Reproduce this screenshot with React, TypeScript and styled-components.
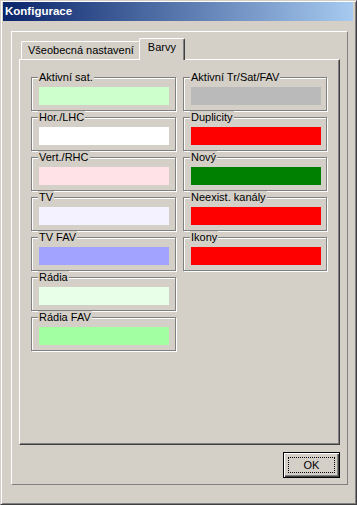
import styled, { createGlobalStyle } from 'styled-components';

const GlobalStyle = createGlobalStyle`
  html, body {
    margin: 0;
    padding: 0;
    background: #d4d0c8;
  }
  body {
    font-family: "Liberation Sans", Arial, sans-serif;
    font-size: 11px;
    color: #000;
  }
`;

const Window = styled.div`
  box-sizing: border-box;
  width: 357px;
  height: 505px;
  background: #d4d0c8;
  border: 1px solid;
  border-color: #d4d0c8 #404040 #404040 #d4d0c8;
  box-shadow: inset 1px 1px 0 #fff, inset -1px -1px 0 #808080;
  padding: 1px 3px 0 2px;
`;

const TitleBar = styled.div`
  height: 19px;
  background: linear-gradient(to right, #0a246a, #a6caf0);
  color: #fff;
  font-weight: bold;
  font-size: 11.5px;
  line-height: 19px;
  padding-left: 2px;
`;

const Frame = styled.div`
  box-sizing: border-box;
  width: 337px;
  height: 454px;
  margin: 10px 0 0 8px;
  border: 1px solid;
  border-color: #fff #808080 #808080 #fff;
  padding: 6px 7px 0 7px;
`;

const TabRow = styled.div`
  display: flex;
  align-items: flex-end;
  height: 21px;
  padding-left: 2px;
`;

const Tab = styled.div<{ $active?: boolean }>`
  position: relative;
  box-sizing: border-box;
  height: ${(p) => (p.$active ? 22 : 18)}px;
  margin: ${(p) => (p.$active ? '0 -2px -1px -2px' : '0')};
  padding: 2px ${(p) => (p.$active ? 8 : 6)}px 0;
  line-height: 13px;
  background: #d4d0c8;
  border-top: 1px solid #fff;
  border-left: 1px solid #fff;
  border-right: 1px solid #404040;
  box-shadow: inset -1px 0 0 #808080;
  border-radius: 2px 2px 0 0;
  z-index: ${(p) => (p.$active ? 2 : 1)};
  white-space: nowrap;
`;

const Panel = styled.div`
  box-sizing: border-box;
  width: 321px;
  height: 386px;
  border: 1px solid;
  border-color: #fff #404040 #404040 #fff;
  box-shadow: inset -1px -1px 0 #808080;
  padding: 17px 0 0 11px;
  display: grid;
  grid-template-columns: 145px 144px;
  column-gap: 7px;
  align-content: start;
  align-items: start;
`;

const Column = styled.div`
  display: flex;
  flex-direction: column;
  gap: 6px;
`;

const Group = styled.div`
  position: relative;
  box-sizing: border-box;
  height: 34px;
  border: 1px solid #808080;
  box-shadow: inset 1px 1px 0 #fff, 1px 1px 0 #fff;
  padding: 9px 0 0 7px;
`;

const GroupLabel = styled.span`
  position: absolute;
  top: -7px;
  left: 6px;
  padding: 0 1px;
  line-height: 13px;
  background: #d4d0c8;
  white-space: nowrap;
`;

const Swatch = styled.div<{ $color: string }>`
  width: 130px;
  height: 18px;
  background: ${(p) => p.$color};
`;

const ButtonRow = styled.div`
  display: flex;
  justify-content: flex-end;
  width: 321px;
  margin-top: 7px;
`;

const Button = styled.button`
  box-sizing: border-box;
  width: 57px;
  height: 26px;
  padding: 0;
  background: #d4d0c8;
  border: 1px solid #000;
  box-shadow: inset 1px 1px 0 #fff, inset -1px -1px 0 #404040, inset -2px -2px 0 #808080;
  font-family: "Liberation Sans", Arial, sans-serif;
  font-size: 11px;
  color: #000;
  display: flex;
  align-items: center;
  justify-content: center;
`;

const Focus = styled.span`
  box-sizing: border-box;
  width: 47px;
  height: 16px;
  border: 1px dotted #000;
  display: flex;
  align-items: center;
  justify-content: center;
  line-height: 13px;
`;

const leftGroups = [
  { label: 'Aktivní sat.', color: '#ccffcc' },
  { label: 'Hor./LHC', color: '#ffffff' },
  { label: 'Vert./RHC', color: '#ffe2e8' },
  { label: 'TV', color: '#f4f2ff' },
  { label: 'TV FAV', color: '#a2a2ff' },
  { label: 'Rádia', color: '#e8ffe8' },
  { label: 'Rádia FAV', color: '#a2ffa2' },
];

const rightGroups = [
  { label: 'Aktivní Tr/Sat/FAV', color: '#bababa' },
  { label: 'Duplicity', color: '#ff0000' },
  { label: 'Nový', color: '#008000' },
  { label: 'Neexist. kanály', color: '#ff0000' },
  { label: 'Ikony', color: '#ff0000' },
];

function ColorGroup(props: { label: string, color: string }) {
  return (
    <Group>
      <GroupLabel>{props.label}</GroupLabel>
      <Swatch $color={props.color} />
    </Group>
  );
}

export default function App() {
  return (
    <>
      <GlobalStyle />
      <Window>
        <TitleBar>Konfigurace</TitleBar>
        <Frame>
          <TabRow>
            <Tab>Všeobecná nastavení</Tab>
            <Tab $active>Barvy</Tab>
          </TabRow>
          <Panel>
            <Column>
              {leftGroups.map((g) => <ColorGroup key={g.label} {...g} />)}
            </Column>
            <Column>
              {rightGroups.map((g) => <ColorGroup key={g.label} {...g} />)}
            </Column>
          </Panel>
          <ButtonRow>
            <Button><Focus>OK</Focus></Button>
          </ButtonRow>
        </Frame>
      </Window>
    </>
  );
}
